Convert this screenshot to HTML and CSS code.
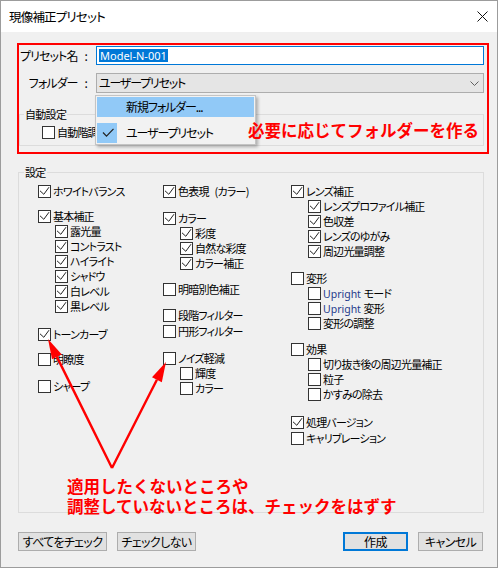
FILE: index.html
```html
<!DOCTYPE html>
<html lang="ja">
<head>
<meta charset="utf-8">
<title>現像補正プリセット</title>
<link rel="stylesheet" href="styles.css">
</head>
<body>
<div class="window">
  <div class="titlebar">
    <span class="title">現像補正プリセット</span>
    <svg class="close" viewBox="0 0 11 11"><path d="M0.5 0.5 10.5 10.5 M10.5 0.5 0.5 10.5"/></svg>
  </div>
  <div class="content">
    <div class="preset-box">
      <div class="form-row">
        <span class="form-label">プリセット名<span class="colon">:</span></span>
        <div class="input"><span class="selected">Model-N-001</span></div>
      </div>
      <div class="form-row row2">
        <span class="form-label">フォルダー<span class="colon">:</span></span>
        <div class="select"><span>ユーザープリセット</span><svg class="chev" viewBox="0 0 9 5"><path d="M0.5 0.5 4.5 4.5 8.5 0.5"/></svg></div>
      </div>
      <fieldset class="group auto">
        <legend>自動設定</legend>
        <div class="cb auto-cb"><span class="box"></span>自動階調</div>
      </fieldset>
      <div class="menu">
        <div class="menu-item hover">新規フォルダー...</div>
        <div class="menu-item"><span class="mark"><svg viewBox="0 0 20 20"><path d="M6 9.5 9.5 13.2 16.5 5.8"/></svg></span>ユーザープリセット</div>
      </div>
      <div class="note note-folder">必要に応じてフォルダーを作る</div>
    </div>

    <fieldset class="group settings">
      <legend>設定</legend>
      <div class="cols">
        <div class="col">
          <div class="cb"><span class="box"><svg viewBox="0 0 11 11"><path d="M1 4.8 4.8 8.3 10 1.2"/></svg></span>ホワイトバランス</div>
          <div class="cb sp10"><span class="box"><svg viewBox="0 0 11 11"><path d="M1 4.8 4.8 8.3 10 1.2"/></svg></span>基本補正</div>
          <div class="cb sub"><span class="box"><svg viewBox="0 0 11 11"><path d="M1 4.8 4.8 8.3 10 1.2"/></svg></span>露光量</div>
          <div class="cb sub"><span class="box"><svg viewBox="0 0 11 11"><path d="M1 4.8 4.8 8.3 10 1.2"/></svg></span>コントラスト</div>
          <div class="cb sub"><span class="box"><svg viewBox="0 0 11 11"><path d="M1 4.8 4.8 8.3 10 1.2"/></svg></span>ハイライト</div>
          <div class="cb sub"><span class="box"><svg viewBox="0 0 11 11"><path d="M1 4.8 4.8 8.3 10 1.2"/></svg></span>シャドウ</div>
          <div class="cb sub"><span class="box"><svg viewBox="0 0 11 11"><path d="M1 4.8 4.8 8.3 10 1.2"/></svg></span>白レベル</div>
          <div class="cb sub"><span class="box"><svg viewBox="0 0 11 11"><path d="M1 4.8 4.8 8.3 10 1.2"/></svg></span>黒レベル</div>
          <div class="cb sp13"><span class="box"><svg viewBox="0 0 11 11"><path d="M1 4.8 4.8 8.3 10 1.2"/></svg></span>トーンカーブ</div>
          <div class="cb sp10"><span class="box"></span>明瞭度</div>
          <div class="cb sp12"><span class="box"></span>シャープ</div>
        </div>
        <div class="col">
          <div class="cb"><span class="box"><svg viewBox="0 0 11 11"><path d="M1 4.8 4.8 8.3 10 1.2"/></svg></span>色表現<span class="paren">(カラー)</span></div>
          <div class="cb sp12"><span class="box"><svg viewBox="0 0 11 11"><path d="M1 4.8 4.8 8.3 10 1.2"/></svg></span>カラー</div>
          <div class="cb sub"><span class="box"><svg viewBox="0 0 11 11"><path d="M1 4.8 4.8 8.3 10 1.2"/></svg></span>彩度</div>
          <div class="cb sub"><span class="box"><svg viewBox="0 0 11 11"><path d="M1 4.8 4.8 8.3 10 1.2"/></svg></span>自然な彩度</div>
          <div class="cb sub"><span class="box"><svg viewBox="0 0 11 11"><path d="M1 4.8 4.8 8.3 10 1.2"/></svg></span>カラー補正</div>
          <div class="cb sp11"><span class="box"></span>明暗別色補正</div>
          <div class="cb sp11"><span class="box"></span>段階フィルター</div>
          <div class="cb sp1"><span class="box"></span>円形フィルター</div>
          <div class="cb sp12"><span class="box"></span>ノイズ軽減</div>
          <div class="cb sub"><span class="box"></span>輝度</div>
          <div class="cb sub"><span class="box"></span>カラー</div>
        </div>
        <div class="col">
          <div class="cb"><span class="box"><svg viewBox="0 0 11 11"><path d="M1 4.8 4.8 8.3 10 1.2"/></svg></span>レンズ補正</div>
          <div class="cb sub"><span class="box"><svg viewBox="0 0 11 11"><path d="M1 4.8 4.8 8.3 10 1.2"/></svg></span>レンズプロファイル補正</div>
          <div class="cb sub"><span class="box"><svg viewBox="0 0 11 11"><path d="M1 4.8 4.8 8.3 10 1.2"/></svg></span>色収差</div>
          <div class="cb sub"><span class="box"><svg viewBox="0 0 11 11"><path d="M1 4.8 4.8 8.3 10 1.2"/></svg></span>レンズのゆがみ</div>
          <div class="cb sub"><span class="box"><svg viewBox="0 0 11 11"><path d="M1 4.8 4.8 8.3 10 1.2"/></svg></span>周辺光量調整</div>
          <div class="cb sp12"><span class="box"></span>変形</div>
          <div class="cb sub"><span class="box"></span><span><span class="latin">Upright</span> モード</span></div>
          <div class="cb sub"><span class="box"></span><span><span class="latin">Upright</span> 変形</span></div>
          <div class="cb sub"><span class="box"></span>変形の調整</div>
          <div class="cb sp11"><span class="box"></span>効果</div>
          <div class="cb sub"><span class="box"></span>切り抜き後の周辺光量補正</div>
          <div class="cb sub"><span class="box"></span>粒子</div>
          <div class="cb sub"><span class="box"></span>かすみの除去</div>
          <div class="cb sp13"><span class="box"><svg viewBox="0 0 11 11"><path d="M1 4.8 4.8 8.3 10 1.2"/></svg></span>処理バージョン</div>
          <div class="cb sp1"><span class="box"></span>キャリブレーション</div>
        </div>
      </div>
    </fieldset>

    <div class="buttons">
      <button class="btn w89">すべてをチェック</button>
      <button class="btn w79">チェックしない</button>
      <span class="spacer"></span>
      <button class="btn w65 default">作成</button>
      <button class="btn w65">キャンセル</button>
    </div>
  </div>

  <svg class="arrows" viewBox="0 0 500 568">
    <path class="shaft" d="M112 468 L56.9 356.9 M112 468 L156.9 379.8"/>
    <polygon points="48,339 61.8,354.5 52,359.3"/>
    <polygon points="166,362 161.8,382.3 152,377.3"/>
  </svg>
  <div class="note note-check">
    <div class="note-line">適用したくないところや</div>
    <div class="note-line">調整していないところは、チェックをはずす</div>
  </div>
</div>
</body>
</html>
```

FILE: styles.css
```css
* { box-sizing: border-box; }
html, body { margin: 0; padding: 0; background: #fff; }
body {
  font-family: "Noto Sans CJK JP", "Noto Sans", sans-serif;
  font-size: 11px;
  color: #000;
  font-feature-settings: "palt";
}
.window {
  position: relative;
  width: 498px;
  height: 568px;
  border: 1px solid #9c9c9c;
  background: #f0f0f0;
  display: flex;
  flex-direction: column;
}
.titlebar {
  height: 31px;
  flex: none;
  background: #fff;
  display: flex;
  align-items: center;
  justify-content: space-between;
  padding: 0 9px 0 8px;
}
.title { font-size: 12.5px; line-height: 16px; letter-spacing: -0.8px; }
.close { width: 11px; height: 11px; }
.close path { stroke: #111; stroke-width: 1; fill: none; }

.content {
  flex: 1;
  padding: 11px 0 0 16px;
  display: flex;
  flex-direction: column;
}

/* preset box */
.preset-box {
  position: relative;
  width: 472px;
  height: 111px;
  border: 2px solid #ff0000;
  padding: 1px 3px 0 0;
}
.form-row {
  display: grid;
  grid-template-columns: 77px 1fr;
  align-items: center;
  font-size: 12px;
}
.row2 { margin-top: 8px; }
.form-label {
  text-align: right;
  padding-right: 9px;
  line-height: 16px;
  letter-spacing: -0.9px;
  white-space: nowrap;
}
.colon { margin-left: 7px; }
.input {
  height: 19px;
  border: 1px solid #0078d7;
  background: #fff;
  padding-left: 2px;
  display: flex;
  align-items: center;
}
.selected {
  font-family: "Noto Sans", sans-serif;
  font-size: 11px;
  line-height: 13px;
  background: #0078d7;
  color: #fff;
  padding: 0 1px;
}
.select {
  height: 20px;
  border: 1px solid #adadad;
  background: #e5e5e5;
  padding: 0 4px 0 2px;
  display: flex;
  align-items: center;
  justify-content: space-between;
  line-height: 16px;
  letter-spacing: -1.2px;
}
.chev { width: 9px; height: 5px; }
.chev path { stroke: #606060; stroke-width: 1; fill: none; }

.group {
  margin: 0;
  border: 1px solid #dcdcdc;
  min-inline-size: 0;
}
.group legend {
  padding: 0 1px;
  margin: 0;
  font-size: 11px;
  line-height: 13px;
  letter-spacing: -0.7px;
}
.auto {
  margin-top: 15px;
  height: 38px;
  padding: 4px 0 0 4px;
  width: 465px;
}
.auto-cb { margin-left: 18px; }

.menu {
  position: absolute;
  left: 76px;
  top: 50px;
  width: 161px;
  height: 50px;
  background: #f2f2f2;
  border: 1px solid #c4c4c4;
  box-shadow: 2px 2px 3px rgba(0, 0, 0, 0.28);
  padding: 1px;
  display: flex;
  flex-direction: column;
  gap: 6px;
  font-size: 12px;
  letter-spacing: -1.1px;
}
.menu-item {
  height: 20px;
  display: flex;
  align-items: center;
  padding-left: 29px;
  line-height: 16px;
}
.menu-item.hover { background: #91c9f7; }
.mark {
  width: 20px;
  height: 20px;
  margin-left: -29px;
  margin-right: 9px;
  background: #91c9f7;
}
.mark svg { width: 20px; height: 20px; display: block; }
.mark path { stroke: #222; stroke-width: 1.2; fill: none; }

.note {
  position: absolute;
  color: #ff0000;
  font-weight: 700;
  font-size: 16.5px;
  line-height: 20px;
  white-space: nowrap;
  font-feature-settings: normal;
}
.note-line { line-height: 20px; }
.note-folder { left: 229px; top: 75px; }
.note-check { left: 66px; top: 475px; }

/* settings */
.settings {
  margin: 12px 0 0 1px;
  width: 466px;
  height: 347px;
  padding: 5px 0 0 5px;
}
.cols {
  display: grid;
  grid-template-columns: 125px 128px 1fr;
  margin-left: 14px;
}
.col { display: flex; flex-direction: column; }
.cb {
  display: flex;
  align-items: center;
  height: 15px;
  gap: 2px;
  white-space: nowrap;
  line-height: 15px;
  letter-spacing: -0.8px;
}
.paren { margin-left: 4px; }
.sub { margin-left: 17px; }
.sp1 { margin-top: 1px; }
.sp10 { margin-top: 10px; }
.sp11 { margin-top: 11px; }
.sp12 { margin-top: 12px; }
.sp13 { margin-top: 13px; }
.box {
  flex: none;
  width: 13px;
  height: 13px;
  border: 1px solid #333;
  background: #fff;
}
.box svg { display: block; width: 11px; height: 11px; }
.box path { stroke: #222; stroke-width: 1; fill: none; }
.latin {
  font-family: "Noto Sans", sans-serif;
  color: #1f3b8c;
  font-size: 10.5px;
  letter-spacing: 0;
  margin-right: 1px;
}

/* buttons */
.buttons {
  display: flex;
  gap: 10px;
  margin: 19px 14px 0 1px;
}
.spacer { flex: 1; }
.btn {
  height: 19px;
  padding: 0;
  border: 1px solid #adadad;
  background: #e1e1e1;
  font-family: "Noto Sans CJK JP", sans-serif;
  font-feature-settings: "palt";
  font-size: 12px;
  line-height: 15px;
  letter-spacing: -0.6px;
  color: #000;
}
.btn.default { border: 2px solid #0078d7; }
.w89 { width: 89px; }
.w79 { width: 79px; }
.w65 { width: 65px; }

.arrows {
  position: absolute;
  left: -1px;
  top: -1px;
  width: 500px;
  height: 568px;
  pointer-events: none;
}
.arrows .shaft { stroke: #ff0000; stroke-width: 2.4; fill: none; }
.arrows polygon { fill: #ff0000; }
```
